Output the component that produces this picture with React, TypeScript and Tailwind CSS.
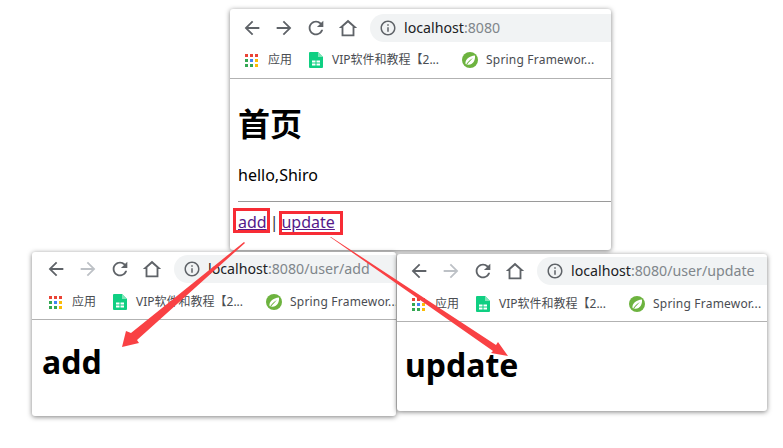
import React from 'react';

const uiFont = { fontFamily: '"Noto Sans", "Noto Sans CJK SC", sans-serif' };

const AppsIcon = () => {
  const colors = ['#ea4335', '#ea4335', '#ea4335', '#34a853', '#4285f4', '#fbbc05', '#34a853', '#34a853', '#fbbc05'];
  return (
    <div className="grid grid-cols-3 gap-[2px] w-[13px] h-[13px] shrink-0">
      {colors.map((c, i) => (
        <div key={i} className="w-[3px] h-[3px]" style={{ backgroundColor: c }} />
      ))}
    </div>
  );
};

const SheetIcon = () => (
  <svg width="14" height="16" viewBox="0 0 14 16" className="shrink-0">
    <path d="M1 0h8l5 5v10a1 1 0 0 1-1 1H1a1 1 0 0 1-1-1V1a1 1 0 0 1 1-1z" fill="#0fcf82" />
    <path d="M9 0l5 5H9z" fill="#7fe5b8" />
    <path d="M3 8.500h3.500v2H3zM7.500 8.500H11v2H7.500zM3 11.500h3.500v2H3zM7.500 11.500H11v2H7.500z" fill="#fff" />
  </svg>
);

const SpringIcon = () => (
  <svg width="16" height="16" viewBox="0 0 16 16" className="shrink-0">
    <circle cx="8" cy="8" r="8" fill="#6db33f" />
    <path d="M3.500 12C3 7.500 7 4 13 3.500c.5 5-2 9-6.500 9.300-1.200.1-2.200-.2-3-.8z" fill="#fff" />
    <path d="M4 12.500C6 9.500 8 7.500 11 6c-2 2.200-4 4-6 6.800z" fill="#6db33f" />
  </svg>
);

const NavIcon = ({ d, color = '#5f6368' }: { d: string; color?: string }) => (
  <svg width="22" height="22" viewBox="0 0 24 24" fill={color}>
    <path d={d} />
  </svg>
);

const BrowserWindow = ({
  url,
  path,
  className,
  forwardOff,
  insetLeft,
  insetTop,
  children,
}: {
  url: string;
  path?: string;
  className: string;
  forwardOff?: boolean;
  insetLeft?: boolean;
  insetTop?: boolean;
  children: React.ReactNode;
}) => (
  <div
    className={`absolute bg-white rounded-[3px] shadow-[0_1px_5px_rgba(0,0,0,0.5)] overflow-hidden ${className}`}
    style={uiFont}
  >
    <div className={`flex items-start ${insetLeft ? 'pl-[13px]' : 'pl-[11px]'} ${insetTop ? 'h-[37px] pt-[5px]' : 'h-[35px] pt-[3px]'}`}>
      <div className="flex items-center gap-[10px] h-[28px]">
        <NavIcon d="M20 11H7.830l5.590-5.590L12 4l-8 8 8 8 1.410-1.410L7.830 13H20v-2z" />
        <NavIcon
          d="M12 4l-1.410 1.410L16.170 11H4v2h12.170l-5.580 5.590L12 20l8-8z"
          color={forwardOff ? '#bdc1c6' : '#5f6368'}
        />
        <NavIcon d="M17.650 6.350A7.958 7.958 0 0 0 12 4c-4.420 0-7.990 3.580-7.990 8s3.570 8 7.990 8c3.730 0 6.840-2.550 7.730-6h-2.080A5.990 5.990 0 0 1 12 18c-3.310 0-6-2.690-6-6s2.690-6 6-6c1.660 0 3.140.69 4.220 1.780L13 11h7V4l-2.350 2.350z" />
        <NavIcon d="M12 3L2 12h3v9h14v-9h3L12 3zm0 2.900l5 4.500V19H7v-8.600l5-4.500z" />
      </div>
      <div className="flex-1 ml-[11px] h-[28px] bg-[#f1f3f4] rounded-l-[14px] flex items-center pl-[9px]">
        <svg width="18" height="18" viewBox="0 0 24 24" fill="#5f6368" className="shrink-0">
          <path d="M11 7h2v2h-2zm0 4h2v6h-2zm1-9C6.480 2 2 6.480 2 12s4.480 10 10 10 10-4.480 10-10S17.520 2 12 2zm0 18c-4.410 0-8-3.590-8-8s3.590-8 8-8 8 3.590 8 8-3.590 8-8 8z" />
        </svg>
        <span className="ml-[7px] text-[14.200px] text-[#202124] whitespace-nowrap">
          {url}
          <span className="text-[#80868b]">{path}</span>
        </span>
      </div>
    </div>
    <div className={`flex items-center h-[32px] text-[12px] text-[#4a4d52] whitespace-nowrap ${insetTop ? 'pb-[4px]' : 'pb-[2px]'} ${insetLeft ? 'pl-[17px]' : 'pl-[15px]'}`}>
      <AppsIcon />
      <span className="ml-[10px]">应用</span>
      <div className="ml-[17px]">
        <SheetIcon />
      </div>
      <span className="ml-[9px] w-[110px] shrink-0">VIP软件和教程【2...</span>
      <div className="ml-[20px] shrink-0">
        <SpringIcon />
      </div>
      <span className="ml-[8px] tracking-[0.2px]">Spring Framewor...</span>
    </div>
    <div className="h-px bg-[#b2b2b2]" />
    {children}
  </div>
);

const linkClass = 'text-[#551a8b] underline text-[16px] leading-[20px]';

export default function App() {
  return (
    <div className="relative w-[783px] h-[448px] bg-white overflow-hidden">
      <BrowserWindow url="localhost" path=":8080" className="left-[230px] top-[9px] w-[381px] h-[241px]" insetTop>
        <div className="text-black" style={uiFont}>
          <h1 className="ml-[8px] mt-[25px] text-[32px] leading-[40px] font-bold">首页</h1>
          <p className="ml-[8px] mt-[20px] text-[16px] leading-[22px]">hello,Shiro</p>
          <div className="ml-[8px] mt-[15px] h-px bg-[#9a9a9a]" />
          <div className="flex items-start ml-[3px] mt-[6px]">
            <div className="border-[3px] border-[#f72c35] pl-[2px] pt-[3px] h-[25px] flex items-center">
              <a className={linkClass}>add</a>
            </div>
            <span className="mt-[4px] text-[16px] leading-[20px] text-[#333]">|</span>
            <div className="ml-[1px] mt-[3px] border-[3px] border-[#f72c35] pr-[5px] pb-[2px] h-[24px] flex items-center">
              <a className={`${linkClass} -ml-px`}>update</a>
            </div>
          </div>
        </div>
      </BrowserWindow>

      <BrowserWindow url="localhost" path=":8080/user/add" className="left-[32px] top-[252px] w-[364px] h-[164px]" forwardOff insetLeft>
        <h1 className="ml-[10px] mt-[22px] text-[32px] leading-[40px] font-bold text-black">add</h1>
      </BrowserWindow>

      <BrowserWindow url="localhost" path=":8080/user/update" className="left-[397px] top-[254px] w-[370px] h-[157px]" forwardOff>
        <h1 className="ml-[8px] mt-[23px] text-[32px] leading-[40px] font-bold text-black">update</h1>
      </BrowserWindow>

      {/* callout arrows drawn over the windows */}
      <svg className="absolute left-0 top-0 pointer-events-none" width="783" height="448" viewBox="0 0 783 448">
        <polygon points="244,242 245,243 137,340 139,343 122,347 126,331 131,333" fill="#f94144" />
        <polygon points="330,237 331,237 496,345 498,342 508,356 491,353 493,351" fill="#f94144" />
      </svg>
    </div>
  );
}
